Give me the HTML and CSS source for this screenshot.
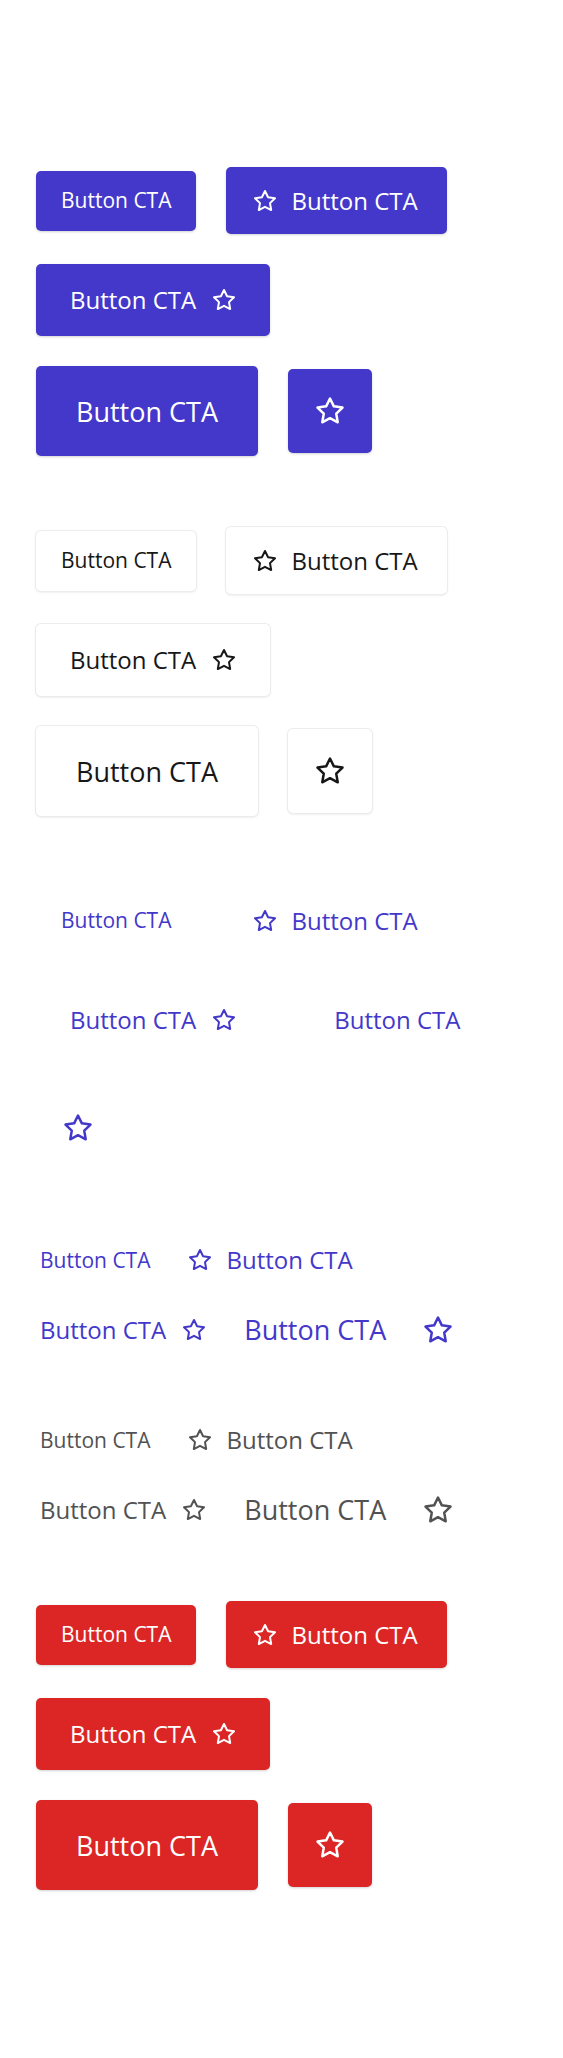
FILE: index.html
```html
<!DOCTYPE html>
<html lang="en">
<head>
<meta charset="utf-8">
<title>Buttons</title>
<link rel="stylesheet" href="styles.css">
</head>
<body>
<svg class="defs" width="0" height="0" aria-hidden="true">
  <symbol id="star" viewBox="0 0 24 24">
    <polygon points="12 2 15.09 8.26 22 9.27 17 14.14 18.18 21.02 12 17.77 5.82 21.02 7 14.14 2 9.27 8.91 8.26 12 2" fill="none" stroke="currentColor" stroke-width="2" stroke-linejoin="round" stroke-linecap="round"/>
  </symbol>
</svg>
<main class="page">
  <section class="group">
    <button class="btn primary sm">Button CTA</button>
    <button class="btn primary md"><svg class="ico"><use href="#star"/></svg><span>Button CTA</span></button>
    <button class="btn primary lg"><span>Button CTA</span><svg class="ico"><use href="#star"/></svg></button>
    <button class="btn primary xl">Button CTA</button>
    <button class="btn primary icon"><svg class="ico big"><use href="#star"/></svg></button>
  </section>

  <section class="group">
    <button class="btn secondary sm">Button CTA</button>
    <button class="btn secondary md"><svg class="ico"><use href="#star"/></svg><span>Button CTA</span></button>
    <button class="btn secondary lg"><span>Button CTA</span><svg class="ico"><use href="#star"/></svg></button>
    <button class="btn secondary xl">Button CTA</button>
    <button class="btn secondary icon"><svg class="ico big"><use href="#star"/></svg></button>
  </section>

  <section class="group">
    <button class="btn ghost sm">Button CTA</button>
    <button class="btn ghost md"><svg class="ico"><use href="#star"/></svg><span>Button CTA</span></button>
    <button class="btn ghost lg"><span>Button CTA</span><svg class="ico"><use href="#star"/></svg></button>
    <button class="btn ghost lg plain">Button CTA</button>
    <button class="btn ghost icon"><svg class="ico big"><use href="#star"/></svg></button>
  </section>

  <section class="group">
    <button class="btn link indigo sm">Button CTA</button>
    <button class="btn link indigo md"><svg class="ico"><use href="#star"/></svg><span>Button CTA</span></button>
    <button class="btn link indigo lg"><span>Button CTA</span><svg class="ico"><use href="#star"/></svg></button>
    <button class="btn link indigo xl"><span>Button CTA</span><svg class="ico big"><use href="#star"/></svg></button>
  </section>

  <section class="group">
    <button class="btn link gray sm">Button CTA</button>
    <button class="btn link gray md"><svg class="ico"><use href="#star"/></svg><span>Button CTA</span></button>
    <button class="btn link gray lg"><span>Button CTA</span><svg class="ico"><use href="#star"/></svg></button>
    <button class="btn link gray xl"><span>Button CTA</span><svg class="ico big"><use href="#star"/></svg></button>
  </section>

  <section class="group">
    <button class="btn danger sm">Button CTA</button>
    <button class="btn danger md"><svg class="ico"><use href="#star"/></svg><span>Button CTA</span></button>
    <button class="btn danger lg"><span>Button CTA</span><svg class="ico"><use href="#star"/></svg></button>
    <button class="btn danger xl">Button CTA</button>
    <button class="btn danger icon"><svg class="ico big"><use href="#star"/></svg></button>
  </section>
</main>
</body>
</html>
```
FILE: styles.css
```css
* { box-sizing: border-box; }

html, body {
  margin: 0;
  padding: 0;
  background: #ffffff;
}

body {
  font-family: "Open Sans", "Noto Sans", sans-serif;
  color: #171717;
}

.defs {
  position: absolute;
  width: 0;
  height: 0;
  overflow: hidden;
}

.page {
  padding: 167px 36px 168px;
  display: flex;
  flex-direction: column;
  gap: 71px;
}

.group {
  width: 475px;
  display: flex;
  flex-wrap: wrap;
  align-items: center;
  column-gap: 30px;
  row-gap: 30px;
}

.btn {
  display: inline-flex;
  align-items: center;
  justify-content: center;
  margin: 0;
  border: 0;
  font-family: inherit;
  font-weight: 400;
  line-height: 1;
  white-space: nowrap;
  border-radius: 5px;
  background: transparent;
  cursor: pointer;
}

.ico {
  width: 24px;
  height: 24px;
  flex: none;
}

.ico.big {
  width: 30px;
  height: 30px;
}

/* sizes */
.sm {
  height: 60px;
  padding: 0 25px;
  font-size: 21px;
}

.md {
  height: 67px;
  padding: 0 29px 0 27px;
  font-size: 24px;
  gap: 14px;
}

.lg {
  height: 72px;
  padding: 0 34px;
  font-size: 24px;
  gap: 16px;
}

.xl {
  height: 90px;
  padding: 0 40px;
  font-size: 27px;
  gap: 37px;
}

.icon {
  width: 84px;
  height: 84px;
  padding: 0;
}

/* variants */
.primary {
  background: #4338ca;
  color: #ffffff;
  box-shadow: 0 1px 3px rgba(0, 0, 0, 0.12), 0 1px 2px rgba(0, 0, 0, 0.06);
}

.danger {
  background: #dc2626;
  color: #ffffff;
  box-shadow: 0 1px 3px rgba(0, 0, 0, 0.12), 0 1px 2px rgba(0, 0, 0, 0.06);
}

.secondary {
  background: #ffffff;
  color: #171717;
  box-shadow: 0 0 0 1px #ececec, 0 1px 3px rgba(0, 0, 0, 0.1), 0 1px 2px rgba(0, 0, 0, 0.05);
}

.ghost {
  color: #4338ca;
}

.link {
  padding: 0 4px;
}

.link.sm { height: 34px; }
.link.md { height: 38px; gap: 14px; }
.link.lg { height: 38px; gap: 16px; }
.link.xl { height: 41px; }

.indigo { color: #4338ca; }
.gray { color: #525252; }
```
